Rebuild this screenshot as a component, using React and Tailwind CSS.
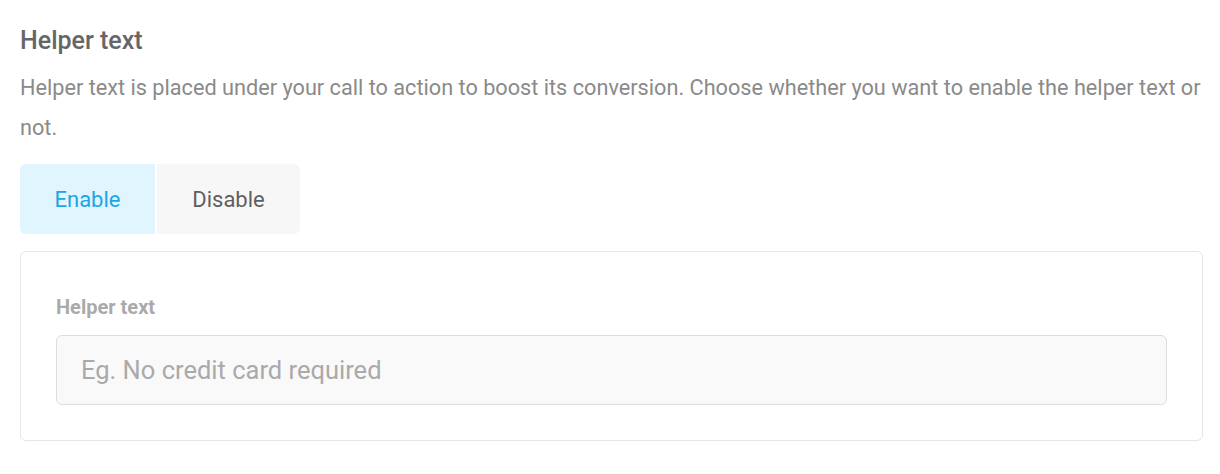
export default function App() {
  return (
    <div className="w-[1220px] h-[474px] bg-white pl-5 pr-[17px] pt-[26px]" style={{ fontFamily: 'Roboto, "Liberation Sans", sans-serif' }}>
      <h2 className="text-[25px] leading-[30px] font-medium text-[#666666]">Helper text</h2>
      <p className="mt-[12px] text-[21.7px] leading-[40px] text-[#8a8a8a]">
        Helper text is placed under your call to action to boost its conversion. Choose whether you want to enable the helper text or not.
      </p>
      <div className="mt-[16px] flex gap-[2px]">
        <button className="w-[135px] h-[70px] rounded-l-[6px] bg-[#e1f5fe] text-[#1ea5e3] text-[22px]">Enable</button>
        <button className="w-[143px] h-[70px] rounded-r-[6px] bg-[#f7f7f7] text-[#5f5f5f] text-[22px]">Disable</button>
      </div>
      <div className="mt-[17px] border border-[#e6e6e6] rounded-[6px] px-[35px] pt-[43px] pb-[35px]">
        <div className="text-[20px] leading-[24px] font-bold text-[#aaaaaa] mb-[16px]">Helper text</div>
        <div className="h-[70px] rounded-[6px] border border-[#dddddd] bg-[#f9f9f9] flex items-center px-[24px]">
          <span className="text-[25.5px] text-[#aaaaaa]">Eg. No credit card required</span>
        </div>
      </div>
    </div>
  );
}
